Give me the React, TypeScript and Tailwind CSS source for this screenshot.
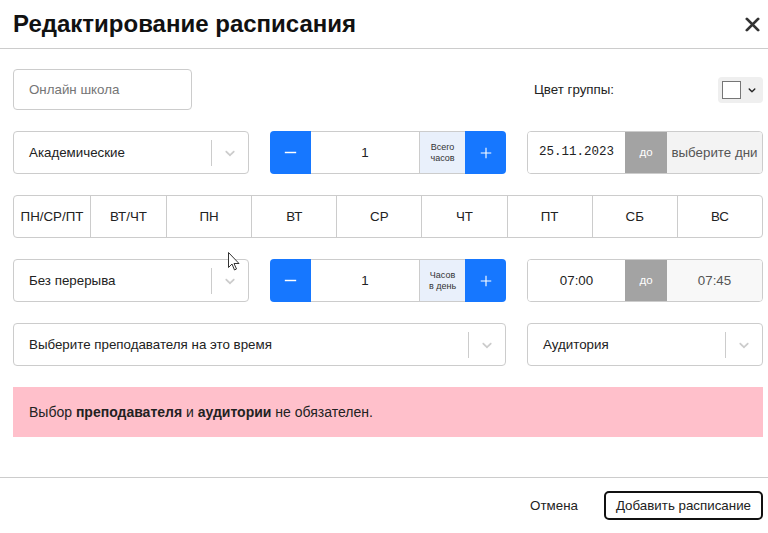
import { ReactNode } from 'react'

const font = { fontFamily: '"Liberation Sans", Arial, sans-serif' }

function Chevron({ className = '' }: { className?: string }) {
  return (
    <svg viewBox="0 0 20 20" className={className} fill="currentColor">
      <path d="M4.516 7.548c0.436-0.446 1.043-0.481 1.576 0l3.908 3.747 3.908-3.747c0.533-0.481 1.141-0.446 1.574 0 0.436 0.445 0.408 1.197 0 1.615-0.406 0.418-4.695 4.502-4.695 4.502-0.217 0.223-0.502 0.335-0.787 0.335s-0.57-0.112-0.789-0.335c0 0-4.287-4.084-4.695-4.502s-0.436-1.17 0-1.615z" />
    </svg>
  )
}

function Select({ label }: { label: string }) {
  return (
    <div className="flex h-[43px] items-center rounded border border-[#cccccc] bg-white">
      <div className="flex-1 pl-[15px] text-[13.333px] text-[#222]">{label}</div>
      <span className="h-[26px] w-px bg-[#cccccc]" />
      <div className="flex w-[36px] justify-center text-[#cccccc]">
        <Chevron className="h-[16px] w-[16px]" />
      </div>
    </div>
  )
}

function Stepper({ top, bottom }: { top: string; bottom: string }) {
  return (
    <div className="flex h-[43px]">
      <button className="flex w-[41px] items-center justify-center rounded-l bg-[#1677ff] text-white">
        <svg viewBox="0 0 16 16" className="h-[13px] w-[13px]" stroke="currentColor" strokeWidth="1.8">
          <path d="M1 8h14" />
        </svg>
      </button>
      <div className="flex flex-1 items-center justify-center border-y border-[#cccccc] text-[13.333px] text-[#222]">1</div>
      <div className="flex w-[46px] flex-col items-center justify-center border-y border-l border-[#cccccc] bg-[#e9f0fb] text-[9px] leading-[11px] text-[#333]">
        <span>{top}</span>
        <span>{bottom}</span>
      </div>
      <button className="flex w-[41px] items-center justify-center rounded-r bg-[#1677ff] text-white">
        <svg viewBox="0 0 16 16" className="h-[12px] w-[12px]" stroke="currentColor" strokeWidth="1.5">
          <path d="M1 8h14M8 1v14" />
        </svg>
      </button>
    </div>
  )
}

function Range({ left, right, mono, rightBg }: { left: ReactNode; right: string; mono?: boolean; rightBg: string }) {
  return (
    <div className="flex h-[43px] overflow-hidden rounded border border-[#cccccc]">
      <div
        className={`flex w-[97px] items-center justify-center bg-white text-[#222] ${mono ? 'text-[12.5px]' : 'text-[13.333px]'}`}
        style={mono ? { fontFamily: '"Liberation Mono", "DejaVu Sans Mono", monospace' } : undefined}
      >
        {left}
      </div>
      <div className="flex w-[42px] items-center justify-center bg-[#a3a3a3] text-[11.5px] text-white">до</div>
      <div className={`flex flex-1 items-center justify-center text-[13.333px] text-[#555] ${rightBg}`}>{right}</div>
    </div>
  )
}

export default function App() {
  const days = [
    { label: 'ПН/СР/ПТ', w: 'w-[76px]' },
    { label: 'ВТ/ЧТ', w: 'w-[76px]' },
    { label: 'ПН', w: 'flex-1' },
    { label: 'ВТ', w: 'flex-1' },
    { label: 'СР', w: 'flex-1' },
    { label: 'ЧТ', w: 'flex-1' },
    { label: 'ПТ', w: 'flex-1' },
    { label: 'СБ', w: 'flex-1' },
    { label: 'ВС', w: 'flex-1' },
  ]

  return (
    <div className="relative h-[533px] w-[768px] bg-white text-[#222]" style={font}>
      {/* Header */}
      <div className="flex h-[49px] items-center justify-between border-b border-[#cccccc] pl-[13px] pr-[8px]">
        <h1 className="text-[24px] font-bold text-[#111]">Редактирование расписания</h1>
        <svg viewBox="0 0 16 16" className="h-[15px] w-[15px] text-[#333]" stroke="currentColor" strokeWidth="3" strokeLinecap="round">
          <path d="M2 2l12 12M14 2L2 14" />
        </svg>
      </div>

      {/* Body */}
      <div className="flex flex-col gap-[21px] pl-[13px] pr-[5px] pt-[20px]">
        <div className="grid grid-cols-3 gap-[21px]">
          <div className="col-span-2">
            <div className="flex h-[41px] w-[179px] items-center rounded border border-[#cccccc] pl-[15px] text-[13.333px] text-[#757575]">
              Онлайн школа
            </div>
          </div>
          <div className="flex items-center justify-between pl-[7px]">
            <span className="text-[13.333px] text-[#222]">Цвет группы:</span>
            <div className="flex h-[26px] w-[45px] items-center gap-[5px] rounded bg-[#efefef] pl-[4px]">
              <span className="h-[18px] w-[19px] border border-[#767676] bg-white" />
              <Chevron className="h-[12px] w-[12px] text-[#222]" />
            </div>
          </div>
        </div>

        <div className="grid grid-cols-3 gap-[21px]">
          <Select label="Академические" />
          <Stepper top="Всего" bottom="часов" />
          <Range left="25.11.2023" right="выберите дни" mono rightBg="bg-[#f3f3f3]" />
        </div>

        <div className="flex h-[43px] overflow-hidden rounded border border-[#cccccc]">
          {days.map((d, i) => (
            <div
              key={d.label}
              className={`flex items-center justify-center text-[13.333px] text-[#222] ${d.w} ${i > 0 ? 'border-l border-[#cccccc]' : ''}`}
            >
              {d.label}
            </div>
          ))}
        </div>

        <div className="grid grid-cols-3 gap-[21px]">
          <Select label="Без перерыва" />
          <Stepper top="Часов" bottom="в день" />
          <Range left="07:00" right="07:45" rightBg="bg-[#f8f8f8]" />
        </div>

        <div className="grid grid-cols-3 gap-[21px]">
          <div className="col-span-2">
            <Select label="Выберите преподавателя на это время" />
          </div>
          <Select label="Аудитория" />
        </div>

        <div className="flex h-[50px] items-center bg-[#ffc0cb] pl-[16px] text-[14px] text-[#222]">
          <span>
            Выбор <b>преподавателя</b> и <b>аудитории</b> не обязателен.
          </span>
        </div>
      </div>

      {/* Footer */}
      <div className="absolute bottom-0 left-0 right-0 flex h-[56px] items-center justify-end gap-[26px] border-t border-[#cccccc] pr-[5px]">
        <span className="text-[13.333px] text-[#222]">Отмена</span>
        <button className="h-[29px] rounded-[5px] border-2 border-[#111] px-[10px] text-[13.333px] text-[#222]">
          Добавить расписание
        </button>
      </div>

      {/* mouse cursor */}
      <svg viewBox="0 0 12 19" className="absolute left-[228px] top-[252px] h-[19px] w-[12px]">
        <path d="M0.5 0.5v15l3.5-3.5 2.5 6 2-1-2.5-5.5h5z" fill="white" stroke="#333" strokeWidth="1" />
      </svg>
    </div>
  )
}
